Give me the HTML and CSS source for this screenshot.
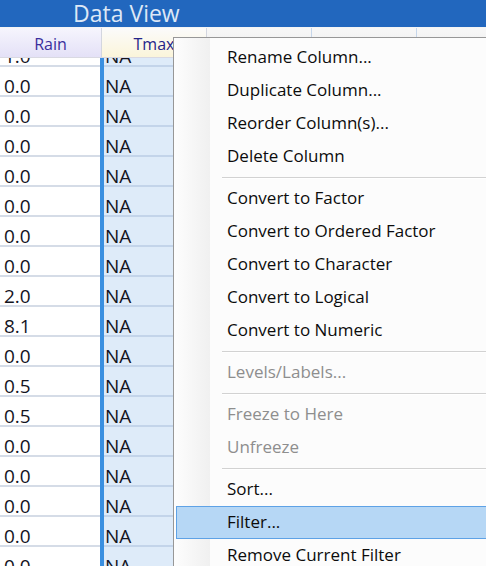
FILE: index.html
```html
<!DOCTYPE html>
<html>
<head>
<meta charset="utf-8">
<link rel="stylesheet" href="styles.css">
</head>
<body>
<div class="window">
  <div class="titlebar"><span class="title">Data View</span></div>
  <div class="header">
    <div class="hcell h-rain">Rain</div>
    <div class="hcell h-tmax">Tmax</div>
    <div class="hcell h-other"></div>
    <div class="hcell h-other"></div>
    <div class="hcell h-last"></div>
  </div>
  <div class="body">
    <div class="rows">
      <div class="row"><div class="cell rain">1.0</div><div class="sel"></div><div class="cell tmax">NA</div></div>
      <div class="row"><div class="cell rain">0.0</div><div class="sel"></div><div class="cell tmax">NA</div></div>
      <div class="row"><div class="cell rain">0.0</div><div class="sel"></div><div class="cell tmax">NA</div></div>
      <div class="row"><div class="cell rain">0.0</div><div class="sel"></div><div class="cell tmax">NA</div></div>
      <div class="row"><div class="cell rain">0.0</div><div class="sel"></div><div class="cell tmax">NA</div></div>
      <div class="row"><div class="cell rain">0.0</div><div class="sel"></div><div class="cell tmax">NA</div></div>
      <div class="row"><div class="cell rain">0.0</div><div class="sel"></div><div class="cell tmax">NA</div></div>
      <div class="row"><div class="cell rain">0.0</div><div class="sel"></div><div class="cell tmax">NA</div></div>
      <div class="row"><div class="cell rain">2.0</div><div class="sel"></div><div class="cell tmax">NA</div></div>
      <div class="row"><div class="cell rain">8.1</div><div class="sel"></div><div class="cell tmax">NA</div></div>
      <div class="row"><div class="cell rain">0.0</div><div class="sel"></div><div class="cell tmax">NA</div></div>
      <div class="row"><div class="cell rain">0.5</div><div class="sel"></div><div class="cell tmax">NA</div></div>
      <div class="row"><div class="cell rain">0.5</div><div class="sel"></div><div class="cell tmax">NA</div></div>
      <div class="row"><div class="cell rain">0.0</div><div class="sel"></div><div class="cell tmax">NA</div></div>
      <div class="row"><div class="cell rain">0.0</div><div class="sel"></div><div class="cell tmax">NA</div></div>
      <div class="row"><div class="cell rain">0.0</div><div class="sel"></div><div class="cell tmax">NA</div></div>
      <div class="row"><div class="cell rain">0.0</div><div class="sel"></div><div class="cell tmax">NA</div></div>
      <div class="row"><div class="cell rain">0.0</div><div class="sel"></div><div class="cell tmax">NA</div></div>
    </div>
  </div>
  <div class="menu">
    <div class="item">Rename Column...</div>
    <div class="item">Duplicate Column...</div>
    <div class="item">Reorder Column(s)...</div>
    <div class="item">Delete Column</div>
    <div class="sep"></div>
    <div class="item">Convert to Factor</div>
    <div class="item">Convert to Ordered Factor</div>
    <div class="item">Convert to Character</div>
    <div class="item">Convert to Logical</div>
    <div class="item">Convert to Numeric</div>
    <div class="sep"></div>
    <div class="item disabled">Levels/Labels...</div>
    <div class="sep"></div>
    <div class="item disabled">Freeze to Here</div>
    <div class="item disabled">Unfreeze</div>
    <div class="sep"></div>
    <div class="item">Sort...</div>
    <div class="item active">Filter...</div>
    <div class="item">Remove Current Filter</div>
  </div>
</div>
</body>
</html>
```
FILE: styles.css
```css
html, body {
  margin: 0;
  padding: 0;
  overflow: hidden;
  background: #ffffff;
}
.window {
  position: relative;
  width: 486px;
  height: 566px;
  overflow: hidden;
  font-family: "Open Sans", "Noto Sans", sans-serif;
}
.titlebar {
  height: 27px;
  background: #2267be;
  padding-left: 73px;
}
.title {
  display: block;
  font-size: 23px;
  line-height: 27px;
  color: #dde8f6;
}
.header {
  display: flex;
  height: 31px;
  box-sizing: border-box;
  border-top: 1px solid #f4f4f4;
  border-bottom: 1px solid #d9d9e2;
  background: linear-gradient(#f7f7f7, #ececec);
}
.hcell {
  box-sizing: border-box;
  height: 100%;
  padding-top: 3px;
  line-height: 26px;
  font-size: 16px;
  text-align: center;
  border-right: 1px solid #d3d6df;
  flex: none;
}
.h-rain {
  width: 102px;
  color: #3a2e9c;
  background: linear-gradient(#f6f5fd, #e4e1f7);
}
.h-tmax {
  width: 105px;
  color: #25258a;
  background: linear-gradient(#fbfbfb, #fbf5da);
}
.h-other {
  width: 105px;
  border-right-color: #c6d6ea;
}
.h-last {
  flex: 1;
  border-right: none;
}
.body {
  height: 508px;
  overflow: hidden;
}
.rows {
  margin-top: -21px;
}
.row {
  display: flex;
  height: 30px;
}
.cell {
  box-sizing: border-box;
  height: 30px;
  padding-top: 10px;
  line-height: 18px;
  font-size: 19px;
  color: #14141e;
  border-bottom: 2px solid #d5dce7;
}
.rain {
  width: 100px;
  padding-left: 4px;
  background: #ffffff;
}
.sel {
  width: 4px;
  background: #3a8fe0;
}
.tmax {
  width: 103px;
  padding-left: 1px;
  background: #deebf9;
  border-bottom-color: #c3d4ea;
}
.menu {
  position: absolute;
  left: 173px;
  top: 37px;
  width: 360px;
  height: 560px;
  box-sizing: border-box;
  padding-top: 3px;
  border: 1px solid #979797;
  background:
    linear-gradient(to right, #fdfdfd, #f0f0f0) 0 0 / 36px 100% no-repeat,
    #fcfcfc;
}
.item {
  height: 33px;
  line-height: 31px;
  box-sizing: border-box;
  padding-left: 53px;
  font-size: 17px;
  color: #0c0c0c;
  white-space: nowrap;
}
.item.disabled {
  color: #8e8e8e;
}
.item.active {
  margin-left: 2px;
  padding-left: 50px;
  background: #b6d7f5;
  border: 1px solid #5ea2e6;
  line-height: 29px;
}
.sep {
  height: 9px;
  box-sizing: border-box;
  margin-left: 48px;
  padding-top: 4px;
}
.sep::before {
  content: "";
  display: block;
  height: 1px;
  background: #d2d2d2;
  border-bottom: 1px solid #ffffff;
}
```
